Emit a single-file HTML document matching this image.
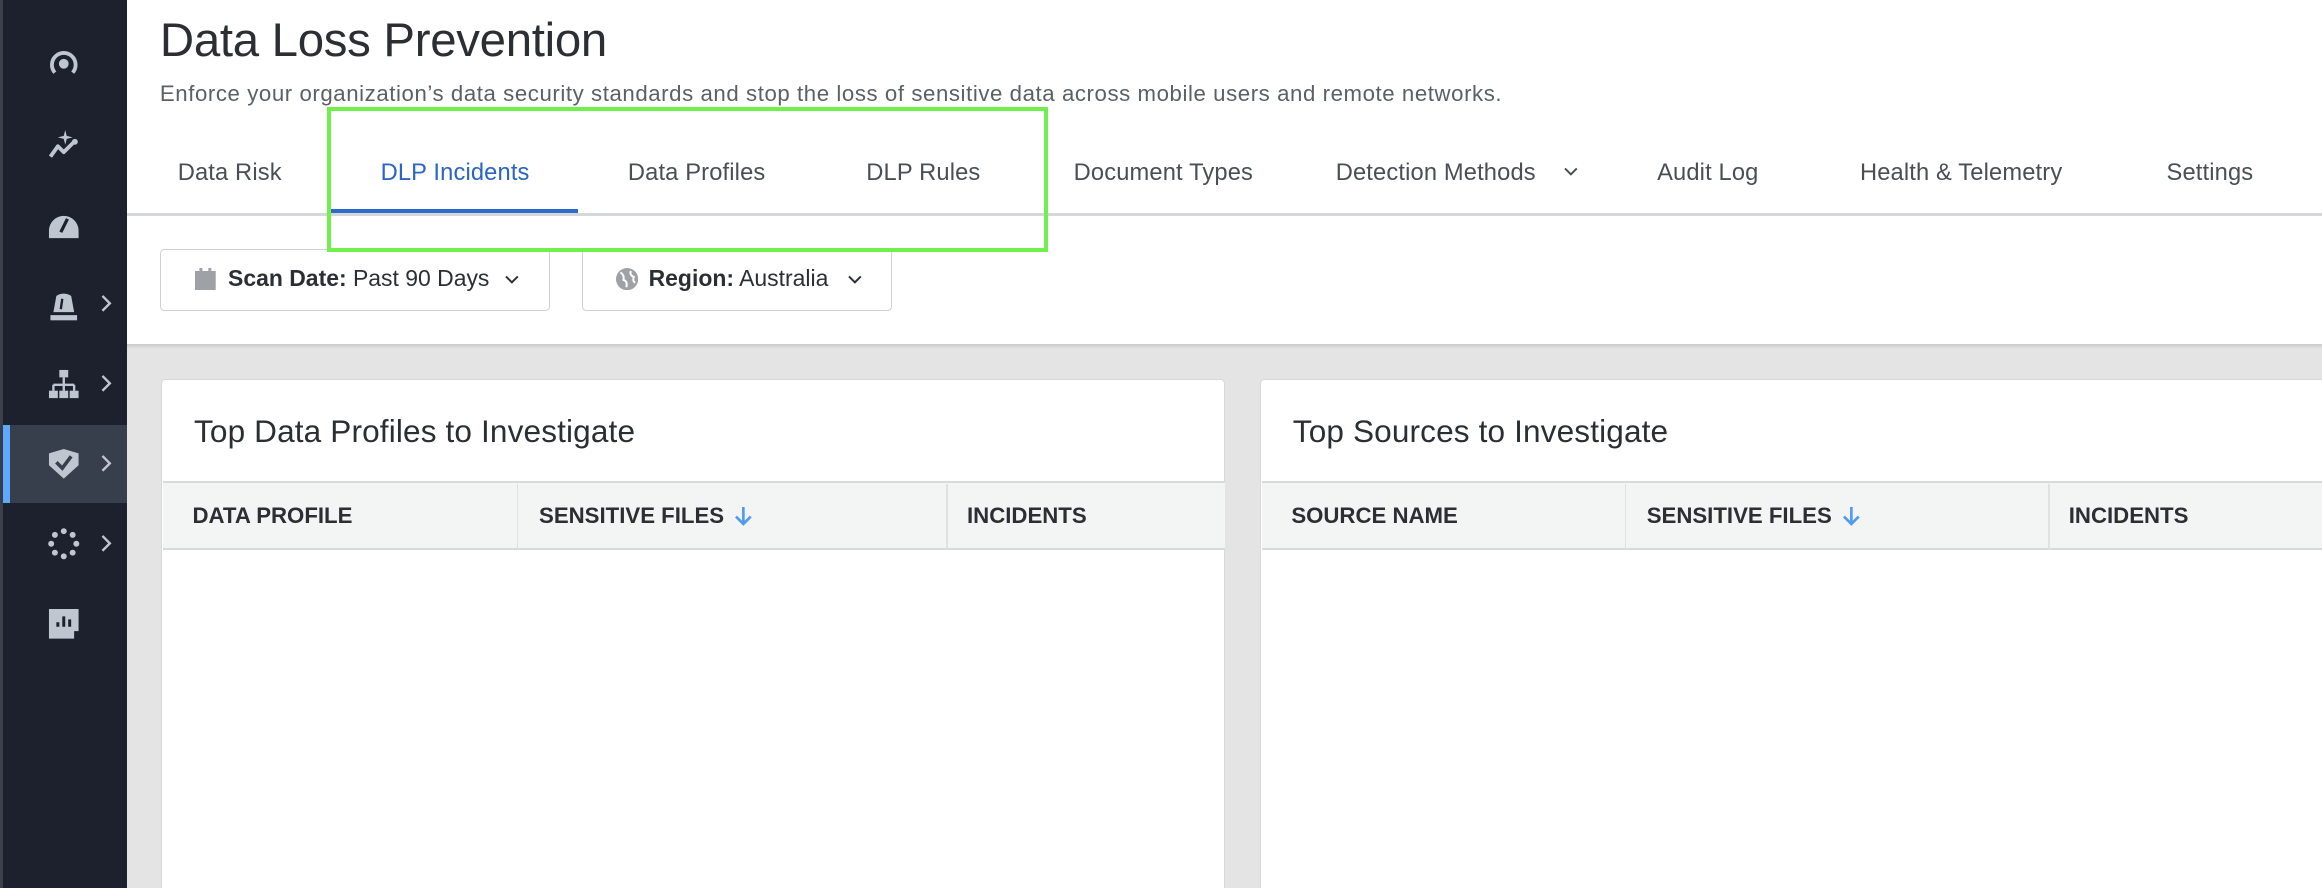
<!DOCTYPE html>
<html><head><meta charset="utf-8">
<style>
html,body{margin:0;padding:0;background:#fff;overflow:hidden}
body{width:2322px;height:888px;}
#w{zoom:1.48087;width:1568px;height:600px;position:relative;font-family:"Liberation Sans",sans-serif;overflow:hidden}
.a{position:absolute;white-space:nowrap}
#sb{left:0;top:0;width:86px;height:600px;background:#1c212d}
#sb:before{content:"";position:absolute;left:0;top:0;width:2px;height:600px;background:#3b4049}
.ic{position:absolute;left:31px;width:24px;height:24px}
.chev{position:absolute;left:66px;width:10px;height:14px}
.tab{top:108px;font-size:16px;color:#4a4f55;letter-spacing:0.1px}
.hd{font-size:15px;font-weight:bold;color:#2b2f33;top:340px;letter-spacing:0px}
.hd svg{vertical-align:-3px;margin-left:6px}
</style></head><body><div id="w">
<div class="a" id="sb">
 <div class="a" style="left:0;top:287px;width:86px;height:53px;background:#373f4d"></div>
 <div class="a" style="left:2px;top:287px;width:5px;height:53px;background:#5fa8ff"></div>
 <svg class="ic" style="top:31px" viewBox="0 0 24 24"><path d="M6 18 A8 8 0 1 1 18 18" fill="none" stroke="#c0c6cf" stroke-width="2.6"/><circle cx="12" cy="12" r="3.3" fill="#c0c6cf"/></svg>
 <svg class="ic" style="top:86px" viewBox="0 0 24 24"><path d="M3 20 L8 13 L12 17 L19 10" fill="none" stroke="#c0c6cf" stroke-width="2.6" stroke-linejoin="round"/><circle cx="19.5" cy="10" r="2" fill="#c0c6cf"/><path d="M13 2 L14 6 L18 7 L14 8 L13 12 L12 8 L8 7 L12 6Z" fill="#c0c6cf"/></svg>
 <svg class="ic" style="top:140px" viewBox="0 0 24 24"><path d="M2 21 V16 A10 10 0 0 1 22 16 V21 Z" fill="#c0c6cf"/><path d="M10 17 L14.5 8" stroke="#1c212d" stroke-width="2.2"/></svg>
 <svg class="ic" style="top:194px" viewBox="0 0 24 24"><path d="M5 17 L7 6 Q12 3 17 6 L19 17Z" fill="#c0c6cf"/><path d="M10 15 L11 8" stroke="#1c212d" stroke-width="1.6"/><rect x="3" y="19" width="18" height="3.5" fill="#c0c6cf"/></svg>
 <svg class="ic" style="top:248px" viewBox="0 0 24 24"><rect x="9" y="2" width="6" height="5" fill="#c0c6cf"/><path d="M12 7 V12 M5 12 H19 M5 12 V16 M12 12 V16 M19 12 V16" stroke="#c0c6cf" stroke-width="1.6" fill="none"/><rect x="2" y="16" width="6" height="5" fill="#c0c6cf"/><rect x="9" y="16" width="6" height="5" fill="#c0c6cf"/><rect x="16" y="16" width="6" height="5" fill="#c0c6cf"/></svg>
 <svg class="ic" style="top:301px" viewBox="0 0 24 24"><path d="M2 5 L12 2 L22 5 V13 L12 22 L2 13Z" fill="#c0c6cf"/><path d="M7 11 L11 15 L17 7" stroke="#373f4d" stroke-width="2.4" fill="none"/></svg>
 <svg class="ic" style="top:355px" viewBox="0 0 24 24" fill="#c0c6cf"><circle cx="12" cy="3.5" r="2"/><circle cx="18" cy="6" r="2"/><circle cx="20.5" cy="12" r="2"/><circle cx="18" cy="18" r="2"/><circle cx="12" cy="20.5" r="2"/><circle cx="6" cy="18" r="2"/><circle cx="3.5" cy="12" r="2"/><circle cx="6" cy="6" r="2"/></svg>
 <svg class="ic" style="top:409px" viewBox="0 0 24 24"><path d="M2 2 H22 V17 H19 V22 H2Z" fill="#c0c6cf"/><path d="M8 14 V11 M12 14 V7 M16 14 V9" stroke="#1c212d" stroke-width="2"/></svg>
 <svg class="chev" style="top:198px" viewBox="0 0 10 14"><path d="M3 2 L8 7 L3 12" fill="none" stroke="#c0c6cf" stroke-width="1.6"/></svg>
 <svg class="chev" style="top:252px" viewBox="0 0 10 14"><path d="M3 2 L8 7 L3 12" fill="none" stroke="#c0c6cf" stroke-width="1.6"/></svg>
 <svg class="chev" style="top:306px" viewBox="0 0 10 14"><path d="M3 2 L8 7 L3 12" fill="none" stroke="#c0c6cf" stroke-width="1.6"/></svg>
 <svg class="chev" style="top:360px" viewBox="0 0 10 14"><path d="M3 2 L8 7 L3 12" fill="none" stroke="#c0c6cf" stroke-width="1.6"/></svg>
</div>

<div class="a" style="left:108px;top:9px;font-size:32px;color:#2b2f33;letter-spacing:-0.2px">Data Loss Prevention</div>
<div class="a" style="left:108px;top:55px;font-size:15px;color:#5b6066;letter-spacing:0.39px">Enforce your organization’s data security standards and stop the loss of sensitive data across mobile users and remote networks.</div>

<div class="a tab" style="left:120px">Data Risk</div>
<div class="a tab" style="left:257px;color:#2a64c5">DLP Incidents</div>
<div class="a tab" style="left:424px">Data Profiles</div>
<div class="a tab" style="left:585px">DLP Rules</div>
<div class="a tab" style="left:725px">Document Types</div>
<div class="a tab" style="left:902px">Detection Methods</div>
<svg class="a" style="left:1055px;top:111px" width="12" height="10" viewBox="0 0 12 10"><path d="M2 3 L6 7 L10 3" fill="none" stroke="#4a4f55" stroke-width="1.3"/></svg>
<div class="a tab" style="left:1119px">Audit Log</div>
<div class="a tab" style="left:1256px">Health &amp; Telemetry</div>
<div class="a tab" style="left:1463px">Settings</div>
<div class="a" style="left:86px;top:144px;width:1482px;height:2px;background:#d4d6d8"></div>
<div class="a" style="left:222px;top:141px;width:168px;height:3px;background:#2f6bcc"></div>

<div class="a" style="left:108px;top:168px;width:262px;height:41px;border:1px solid #cfd2d5;border-radius:3px"></div>
<svg class="a" style="left:132px;top:181px" width="14" height="15" viewBox="0 0 14 15"><rect x="0" y="2" width="14" height="13" fill="#9ea2a7"/><rect x="3" y="0" width="2" height="3" fill="#9ea2a7"/><rect x="9" y="0" width="2" height="3" fill="#9ea2a7"/></svg>
<div class="a" style="left:154px;top:179px;font-size:15.5px;color:#2b2f33;letter-spacing:0px"><b>Scan Date:</b> Past 90 Days</div>
<svg class="a" style="left:340px;top:184px" width="12" height="10" viewBox="0 0 12 10"><path d="M2 3 L6 7 L10 3" fill="none" stroke="#2b2f33" stroke-width="1.3"/></svg>

<div class="a" style="left:393px;top:168px;width:208px;height:41px;border:1px solid #cfd2d5;border-radius:3px"></div>
<svg class="a" style="left:416px;top:181px" width="15" height="15" viewBox="0 0 15 15"><circle cx="7.5" cy="7.5" r="7.5" fill="#9ea2a7"/><path d="M3 3 Q6 5 5 8 Q8 9 7 13 M10 2 Q9 5 12 6 Q11 9 13 10" stroke="#fff" stroke-width="1.3" fill="none"/></svg>
<div class="a" style="left:438px;top:179px;font-size:15.5px;color:#2b2f33;letter-spacing:0px"><b>Region:</b> Australia</div>
<svg class="a" style="left:571px;top:184px" width="12" height="10" viewBox="0 0 12 10"><path d="M2 3 L6 7 L10 3" fill="none" stroke="#2b2f33" stroke-width="1.3"/></svg>

<div class="a" style="left:221px;top:72px;width:481px;height:93px;border:3px solid #6ff04a"></div>

<div class="a" style="left:86px;top:232px;width:1482px;height:368px;background:#e4e4e4"></div>
<div class="a" style="left:86px;top:232px;width:1482px;height:4px;background:linear-gradient(#c9c9c9,#e4e4e4)"></div>

<div class="a" style="left:109px;top:256px;width:717px;height:360px;background:#fff;border:1px solid #d7d9db;border-radius:3px"></div>
<div class="a" style="left:131px;top:279px;font-size:21.3px;color:#2b2f33;letter-spacing:0.1px">Top Data Profiles to Investigate</div>
<div class="a" style="left:110px;top:325px;width:717px;height:44px;background:#f3f4f4;border-top:2px solid #d7d9db;border-bottom:2px solid #d7d9db"></div>
<div class="a" style="left:349px;top:327px;width:1px;height:44px;background:#dfe1e3"></div>
<div class="a" style="left:639px;top:327px;width:1px;height:44px;background:#dfe1e3"></div>
<div class="a hd" style="left:130px">DATA PROFILE</div>
<div class="a hd" style="left:364px">SENSITIVE FILES<svg width="14" height="16" viewBox="0 0 14 16"><path d="M7 2 V13 M2 8.5 L7 13.5 L12 8.5" stroke="#4f9bf0" stroke-width="1.8" fill="none"/></svg></div>
<div class="a hd" style="left:653px">INCIDENTS</div>

<div class="a" style="left:851px;top:256px;width:730px;height:360px;background:#fff;border:1px solid #d7d9db;border-radius:3px"></div>
<div class="a" style="left:873px;top:279px;font-size:21.3px;color:#2b2f33;letter-spacing:0.1px">Top Sources to Investigate</div>
<div class="a" style="left:852px;top:325px;width:730px;height:44px;background:#f3f4f4;border-top:2px solid #d7d9db;border-bottom:2px solid #d7d9db"></div>
<div class="a" style="left:1097px;top:327px;width:1px;height:44px;background:#dfe1e3"></div>
<div class="a" style="left:1383px;top:327px;width:1px;height:44px;background:#dfe1e3"></div>
<div class="a hd" style="left:872px">SOURCE NAME</div>
<div class="a hd" style="left:1112px">SENSITIVE FILES<svg width="14" height="16" viewBox="0 0 14 16"><path d="M7 2 V13 M2 8.5 L7 13.5 L12 8.5" stroke="#4f9bf0" stroke-width="1.8" fill="none"/></svg></div>
<div class="a hd" style="left:1397px">INCIDENTS</div>
</div></body></html>
